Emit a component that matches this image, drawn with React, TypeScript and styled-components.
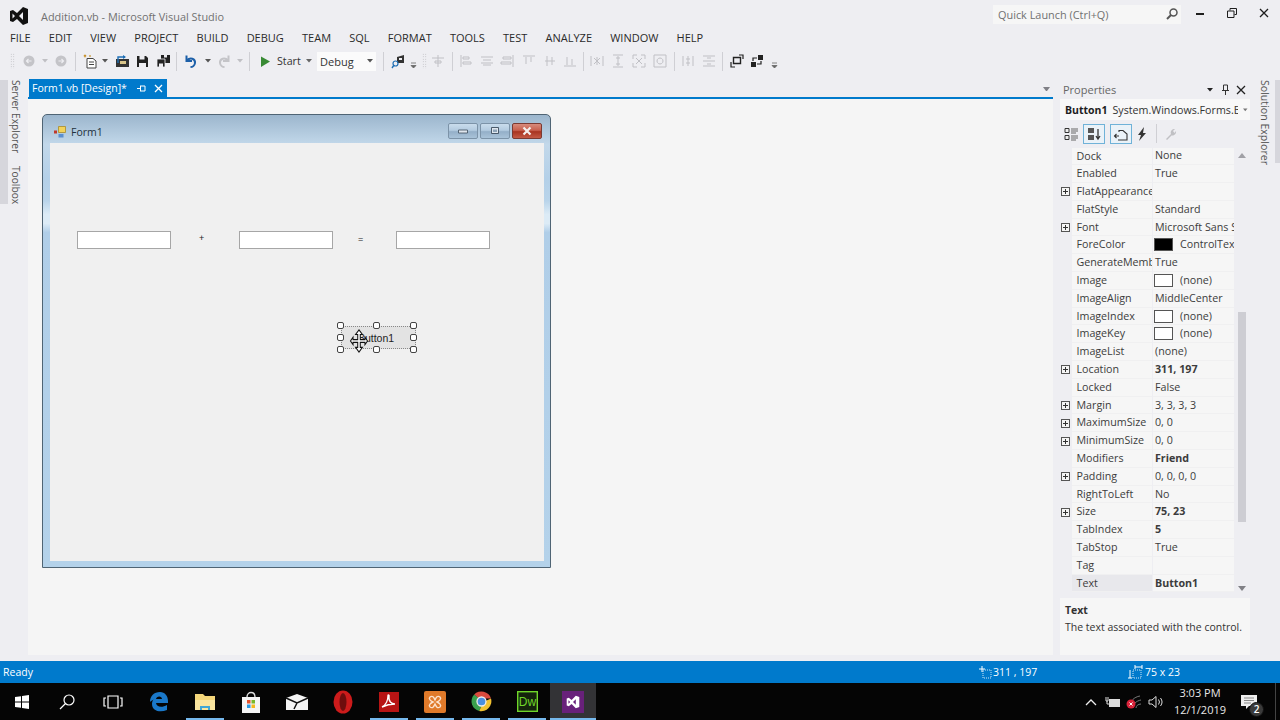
import { ReactNode } from "react";
import styled, { createGlobalStyle } from "styled-components";

const UI_FONT = `"Open Sans", "Noto Sans", "Liberation Sans", sans-serif`;

const GlobalStyle = createGlobalStyle`
  html, body {
    margin: 0;
    padding: 0;
    background: #eeeef2;
  }
  * {
    box-sizing: border-box;
  }
`;

const menus = ["FILE", "EDIT", "VIEW", "PROJECT", "BUILD", "DEBUG", "TEAM", "SQL", "FORMAT", "TOOLS", "TEST", "ANALYZE", "WINDOW", "HELP"];

type Prop = { name: string; value?: string; plus?: boolean; bold?: boolean; swatch?: string; selected?: boolean };

const props: Prop[] = [
  { name: "Dock", value: "None" },
  { name: "Enabled", value: "True" },
  { name: "FlatAppearance", plus: true },
  { name: "FlatStyle", value: "Standard" },
  { name: "Font", value: "Microsoft Sans Serif, 8.25pt", plus: true },
  { name: "ForeColor", value: "ControlText", swatch: "#000" },
  { name: "GenerateMember", value: "True" },
  { name: "Image", value: "(none)", swatch: "#fff" },
  { name: "ImageAlign", value: "MiddleCenter" },
  { name: "ImageIndex", value: "(none)", swatch: "#fff" },
  { name: "ImageKey", value: "(none)", swatch: "#fff" },
  { name: "ImageList", value: "(none)" },
  { name: "Location", value: "311, 197", plus: true, bold: true },
  { name: "Locked", value: "False" },
  { name: "Margin", value: "3, 3, 3, 3", plus: true },
  { name: "MaximumSize", value: "0, 0", plus: true },
  { name: "MinimumSize", value: "0, 0", plus: true },
  { name: "Modifiers", value: "Friend", bold: true },
  { name: "Padding", value: "0, 0, 0, 0", plus: true },
  { name: "RightToLeft", value: "No" },
  { name: "Size", value: "75, 23", plus: true, bold: true },
  { name: "TabIndex", value: "5", bold: true },
  { name: "TabStop", value: "True" },
  { name: "Tag" },
  { name: "Text", value: "Button1", bold: true, selected: true },
];

const Screen = styled.div`
  width: 1280px;
  height: 720px;
  overflow: hidden;
  display: flex;
  flex-direction: column;
  background: #eeeef2;
  font-family: ${UI_FONT};
  color: #1e1e1e;
`;

const TitleBar = styled.div`
  height: 28px;
  display: flex;
  align-items: center;
  padding: 1px 0 0 9px;
`;

const LogoSlot = styled.div`
  display: flex;
  margin-top: 3px;
`;

const AppTitle = styled.div`
  margin-left: 12px;
  font-size: 10.9px;
  color: #717171;
  flex: 1;
  padding-top: 3px;
`;

const QuickLaunch = styled.div`
  width: 188px;
  height: 19px;
  margin-top: -1px;
  background: #f6f6f6;
  display: flex;
  align-items: center;
  justify-content: space-between;
  padding: 0 2px 0 5px;
  font-size: 10.9px;
  color: #717171;
`;

const WindowButtons = styled.div`
  display: flex;
  width: 99px;
  padding-left: 3px;
  margin-top: -3px;
`;

const WindowButton = styled.div`
  width: 32px;
  height: 20px;
  display: flex;
  align-items: center;
  justify-content: center;
`;

const MenuBar = styled.div`
  height: 18px;
  display: flex;
  align-items: center;
  padding-left: 10px;
  gap: 18.2px;
  font-size: 11px;
  color: #2a2a2a;
`;

const ToolBar = styled.div`
  height: 34px;
  display: flex;
  align-items: flex-start;
  padding: 4px 0 0 10px;
`;

const ToolGroup = styled.div`
  display: flex;
  align-items: center;
  height: 22px;
`;

const Gripper = styled.div<{ $l?: number; $r?: number }>`
  width: 5px;
  height: 16px;
  margin-left: ${(p) => p.$l ?? 0}px;
  margin-right: ${(p) => p.$r ?? 0}px;
  background-image: radial-gradient(#b6b6bb 0.7px, transparent 0.8px);
  background-size: 2.5px 2.5px;
`;

const Divider = styled.div<{ $l: number; $r: number }>`
  width: 1px;
  height: 19px;
  flex: none;
  background: #cfcfd4;
  margin-left: ${(p) => p.$l}px;
  margin-right: ${(p) => p.$r}px;
`;

const ToolSlot = styled.div<{ $w: number }>`
  width: ${(p) => p.$w}px;
  height: 18px;
  flex: none;
  display: flex;
  align-items: center;
  justify-content: center;
`;

const StartLabel = styled.span`
  width: 25px;
  font-size: 10.7px;
  margin-left: 2px;
  color: #333;
`;

const ConfigBox = styled.div`
  width: 59px;
  height: 19px;
  margin-left: 1px;
  background: #fbfbfb;
  display: flex;
  align-items: center;
  justify-content: space-between;
  padding: 0 3px 0 3px;
  font-size: 11px;
  color: #333;
`;

const OverflowSlot = styled.div<{ $l: number }>`
  display: flex;
  margin-left: ${(p) => p.$l}px;
`;

const Workspace = styled.div`
  flex: 1;
  display: flex;
  min-height: 0;
`;

const SideRail = styled.div<{ $w: number; $end?: boolean }>`
  width: ${(p) => p.$w}px;
  flex: none;
  display: flex;
  align-items: flex-start;
  justify-content: ${(p) => (p.$end ? "flex-end" : "flex-start")};
  background: #eeeef2;
`;

const LeftStrip = styled.div`
  width: 8px;
  height: 124px;
  background: #d6d6dc;
`;

const RailTabs = styled.div`
  display: flex;
  flex-direction: column;
  gap: 13px;
  margin-left: 1px;
`;

const RailLabel = styled.div<{ $size: number }>`
  writing-mode: vertical-rl;
  font-size: ${(p) => p.$size}px;
  line-height: 13px;
  color: #555;
`;

const RightStrip = styled.div`
  width: 5px;
  height: 83px;
  background: #d6d6dc;
  margin-left: 4px;
`;

const DocArea = styled.div`
  width: 1025px;
  display: flex;
  flex-direction: column;
`;

const TabRow = styled.div`
  height: 19px;
  border-bottom: 2px solid #007acc;
  display: flex;
  align-items: flex-end;
  justify-content: space-between;
  padding-left: 1px;
`;

const DocTab = styled.div`
  width: 138px;
  height: 18px;
  background: #007acc;
  color: #fff;
  font-size: 10.5px;
  display: flex;
  align-items: center;
  padding-left: 3px;
  white-space: nowrap;
`;

const TabName = styled.span`
  flex: 1;
`;

const TabIcon = styled.span`
  width: 16px;
  height: 16px;
  margin-right: 1px;
  display: flex;
  align-items: center;
  justify-content: center;
`;

const TabMenu = styled.div`
  width: 7px;
  height: 4px;
  margin: 0 3px 6px 0;
  border-left: 3.5px solid transparent;
  border-right: 3.5px solid transparent;
  border-top: 4px solid #7f7f86;
`;

const DesignSurface = styled.div`
  height: 556px;
  background: #f5f5f5;
  padding: 15px 0 0 14px;
`;

const FormWindow = styled.div`
  width: 509px;
  height: 454px;
  border: 1px solid #4f6474;
  border-radius: 5px 5px 0 0;
  background: linear-gradient(180deg, #9cb6cd 0%, #c2d8ea 6.5%, #b4d0e8 14%, #b9d4ea 19%, #dcebf6 22%, #dcebf6 24%, #b0cee8 26%, #b4d2ea 100%);
  display: flex;
  flex-direction: column;
  padding: 0 6px 6px 7px;
`;

const FormTitle = styled.div`
  height: 28px;
  display: flex;
  align-items: center;
  gap: 4px;
  font-size: 10.5px;
  color: #22313d;
  padding: 6px 2px 0 3px;
`;

const FormTitleText = styled.span`
  flex: 1;
`;

const CaptionButtons = styled.div`
  display: flex;
  gap: 2px;
  margin-top: -3px;
`;

const CaptionButton = styled.div<{ $close?: boolean }>`
  width: 30px;
  height: 16px;
  border: 1px solid ${(p) => (p.$close ? "#7b3a32" : "#7c93a8")};
  border-radius: 2px;
  background: ${(p) =>
    p.$close
      ? "linear-gradient(180deg, #d88b7c 0%, #c8604e 45%, #a83420 55%, #c45a45 100%)"
      : "linear-gradient(180deg, #c9dcec 0%, #b3cbe0 45%, #94afc8 55%, #a9c3d9 100%)"};
  display: flex;
  align-items: center;
  justify-content: center;
`;

const FormCanvas = styled.div`
  flex: 1;
  position: relative;
  background: #f0f0f0;
`;

const TextField = styled.div<{ $x: number }>`
  position: absolute;
  left: ${(p) => p.$x}px;
  top: 88px;
  width: 94px;
  height: 18px;
  background: #fff;
  border: 1px solid #a6a6a6;
`;

const OperatorLabel = styled.div<{ $x: number; $y: number }>`
  position: absolute;
  left: ${(p) => p.$x}px;
  top: ${(p) => p.$y}px;
  font-family: "Liberation Sans", sans-serif;
  font-size: 9px;
  color: #222;
`;

const SelectedButton = styled.div`
  position: absolute;
  left: 291px;
  top: 183px;
  width: 75px;
  height: 23px;
  padding-right: 5px;
  border: 1px dotted #888;
  background: #e3e3e3;
  display: flex;
  align-items: center;
  justify-content: center;
  font-family: "Liberation Sans", sans-serif;
  font-size: 10.5px;
  color: #222;
`;

const Handle = styled.div<{ $x: number; $y: number }>`
  position: absolute;
  left: ${(p) => p.$x}px;
  top: ${(p) => p.$y}px;
  width: 7px;
  height: 7px;
  background: #fff;
  border: 1px solid #444;
  border-radius: 2px;
`;

const MoveCursor = styled.svg`
  position: absolute;
  left: 299px;
  top: 185px;
`;

const PropertiesPanel = styled.div`
  width: 190px;
  margin-left: 7px;
  flex: none;
  display: flex;
  flex-direction: column;
`;

const PanelHeader = styled.div`
  height: 19px;
  display: flex;
  align-items: center;
  font-size: 11px;
  color: #666;
  padding: 0 1px 0 3px;
`;

const HeaderDots = styled.div`
  flex: 1;
  height: 6px;
  margin: 0 10px 0 6px;
  background-image: radial-gradient(#c4c4c9 0.6px, transparent 0.7px);
  background-size: 2px 2px;
`;

const HeaderIcon = styled.span`
  width: 16px;
  height: 16px;
  display: flex;
  align-items: center;
  justify-content: center;
  &:first-of-type {
    margin-left: 4px;
  }
`;

const ObjectSelect = styled.div`
  height: 21px;
  background: #f8f8f8;
  display: flex;
  align-items: center;
  padding: 0 2px 0 5px;
  font-size: 10.7px;
  white-space: nowrap;
  overflow: hidden;
  gap: 5px;
`;

const ObjectName = styled.b`
  font-weight: 700;
  font-size: 10.5px;
`;

const ObjectType = styled.span`
  width: 126px;
  overflow: hidden;
  color: #333;
  flex: none;
`;

const PropToolbar = styled.div`
  height: 27px;
  display: flex;
  align-items: center;
  gap: 1px;
`;

const PropToolButton = styled.div<{ $on?: boolean; $w?: number }>`
  width: ${(p) => p.$w ?? 22}px;
  height: 20px;
  display: flex;
  align-items: center;
  justify-content: center;
  border: 1px solid ${(p) => (p.$on ? "#6fb2d8" : "transparent")};
  background: ${(p) => (p.$on ? "#eaf2f8" : "transparent")};
`;

const ToolSpacer = styled.div`
  width: 3px;
`;

const GridWrap = styled.div`
  height: 447px;
  display: flex;
  background: #eeeef2;
`;

const Grid = styled.div`
  width: 174px;
  padding-top: 0.5px;
`;

const Row = styled.div`
  height: 17.8px;
  display: grid;
  grid-template-columns: 12px 80px 82px;
  align-items: center;
  font-size: 10.7px;
  color: #3c3c3c;
`;

const Expander = styled.div`
  display: flex;
  align-items: center;
  justify-content: center;
  height: 100%;
  padding-right: 1px;
`;

const PlusBox = styled.div`
  width: 9px;
  height: 9px;
  border: 1px solid #555;
  position: relative;
  background: #f5f5f5;
  &::before {
    content: "";
    position: absolute;
    left: 1px;
    right: 1px;
    top: 3px;
    height: 1px;
    background: #333;
  }
  &::after {
    content: "";
    position: absolute;
    top: 1px;
    bottom: 1px;
    left: 3px;
    width: 1px;
    background: #333;
  }
`;

const NameCell = styled.div<{ $selected?: boolean }>`
  height: 100%;
  padding-left: 4.5px;
  background: ${(p) => (p.$selected ? "#e8e8ec" : "#f6f6f6")};
  border-bottom: 1px solid #f0f0f1;
  white-space: nowrap;
  overflow: hidden;
  line-height: 17px;
`;

const ValueCell = styled.div<{ $bold?: boolean }>`
  height: 100%;
  margin-left: 1px;
  padding-left: 2px;
  background: #f6f6f6;
  border-bottom: 1px solid #f0f0f1;
  font-weight: ${(p) => (p.$bold ? 700 : 400)};
  white-space: nowrap;
  overflow: hidden;
  display: flex;
  align-items: center;
  line-height: 17px;
`;

const Swatch = styled.span<{ $color: string }>`
  width: 19px;
  height: 13px;
  flex: none;
  margin: 0 7px 0 -1px;
  background: ${(p) => p.$color};
  border: 1px solid #555;
`;

const ScrollTrack = styled.div`
  width: 16px;
  display: flex;
  flex-direction: column;
  align-items: center;
  padding: 6px 0 3px;
`;

const ScrollThumb = styled.div`
  width: 8px;
  height: 210px;
  background: #cdcdd3;
  margin-top: 154px;
  margin-bottom: auto;
`;

const ArrowUp = styled.div`
  border-left: 4px solid transparent;
  border-right: 4px solid transparent;
  border-bottom: 5px solid #a0a0a6;
`;

const ArrowDown = styled.div`
  border-left: 4px solid transparent;
  border-right: 4px solid transparent;
  border-top: 5px solid #808086;
`;

const Description = styled.div`
  margin-top: 4px;
  height: 57px;
  background: #f6f6f6;
  padding: 4px 5px;
  font-size: 10.5px;
  line-height: 17px;
  color: #333;
`;

const DescTitle = styled.div`
  font-weight: 700;
`;

const StatusBar = styled.div`
  height: 22px;
  background: #007acc;
  color: #fff;
  font-size: 10.5px;
  display: flex;
  align-items: center;
  padding-left: 3px;
`;

const StatusReady = styled.span`
  width: 975px;
`;

const StatusItem = styled.span<{ $w: number }>`
  width: ${(p) => p.$w}px;
  display: flex;
  align-items: center;
  gap: 1px;
`;

const Taskbar = styled.div`
  height: 37px;
  background: #050505;
  display: flex;
  align-items: stretch;
  color: #fff;
`;

const TaskCell = styled.div<{ $on?: boolean; $active?: boolean; $w?: number }>`
  width: ${(p) => p.$w ?? 46}px;
  flex: none;
  display: flex;
  align-items: center;
  justify-content: center;
  background: ${(p) => (p.$active ? "#333336" : "transparent")};
  position: relative;
  &::after {
    content: "";
    display: ${(p) => (p.$on ? "block" : "none")};
    position: absolute;
    left: ${(p) => (p.$active ? 0 : 4)}px;
    right: ${(p) => (p.$active ? 0 : 4)}px;
    bottom: 0;
    height: 2px;
    background: #76b9ed;
  }
`;

const Tray = styled.div`
  margin-left: auto;
  display: flex;
  align-items: center;
`;

const TrayIcon = styled.div<{ $w: number }>`
  width: ${(p) => p.$w}px;
  display: flex;
  justify-content: center;
`;

const Clock = styled.div`
  width: 62px;
  padding-bottom: 2px;
  font-size: 11px;
  line-height: 17px;
  text-align: center;
  color: #e8e8e8;
`;

const Notify = styled.div`
  width: 45px;
  height: 100%;
  display: flex;
  align-items: center;
  justify-content: center;
  padding-right: 9px;
  border-right: 1px solid #444;
  margin-right: 4px;
  position: relative;
`;

const NotifyBadge = styled.span`
  position: absolute;
  right: 11px;
  bottom: 3px;
  width: 15px;
  height: 15px;
  border-radius: 50%;
  background: #3a3a3a;
  border: 1px solid #111;
  font-size: 10px;
  line-height: 13px;
  text-align: center;
  color: #fff;
  font-weight: 600;
`;

const Icon = ({ w = 16, h = 16, children }: { w?: number; h?: number; children: ReactNode }) => (
  <svg width={w} height={h} viewBox={`0 0 ${w} ${h}`} fill="none">
    {children}
  </svg>
);

const VsLogo = ({ size, color }: { size: number; color: string }) => (
  <svg width={size} height={size} viewBox="0 0 20 20">
    <path fill={color} d="M14 1l5 2v14l-5 2-6-6-4 3-3-1V5l3-1 4 3zM3.5 7.5v5L6 10zM14 6l-4 4 4 4z" />
  </svg>
);

const Caret = ({ color = "#8a8a8f" }: { color?: string }) => (
  <svg width="6" height="4" viewBox="0 0 6 4">
    <path d="M0 0h6L3 3.5z" fill={color} />
  </svg>
);

const OverflowCaret = () => (
  <svg width="7" height="18" viewBox="0 0 7 18">
    <path d="M1 11h5M1 13.500h5l-2.500 2.500z" stroke="#666" strokeWidth="0.8" fill="#666" />
  </svg>
);

const Grey = ({ d }: { d: string }) => (
  <Icon>
    <path d={d} stroke="#c0c0c5" strokeWidth="1" />
  </Icon>
);

const layoutIcons = [
  "M3 2v12M5 4h6v2H5zM5 9h8v2H5z",
  "M2 4h12M4 7h8M2 10h12M4 12h8",
  "M13 2v12M3 4h8v2H3zM1 9h10v2H1z",
  "M2 3h12M5 4v7M10 4v5",
  "M3 8h10M5 3v10M10 4v8",
  "M2 13h12M5 4v8M10 6v6",
];

const spacingIcons = [
  "M2 3v10M14 3v10M5 5l6 6M11 5l-6 6M8 4v8",
  "M3 2h10M3 14h10M8 3v10M6 5h4M6 11h4",
  "M2 2h4M2 2v4M14 2h-4M14 2v4M2 14h4M2 14v-4M14 14h-4M14 14v-4M5 5l6 6M11 5l-6 6",
  "M2 2h12v12H2zM8 5a3 3 0 1 0 .01 0",
];

const App = () => {
  return (
    <Screen>
      <GlobalStyle />
      <TitleBar>
        <LogoSlot>
          <VsLogo size={20} color="#111" />
        </LogoSlot>
        <AppTitle>Addition.vb - Microsoft Visual Studio</AppTitle>
        <QuickLaunch>
          Quick Launch (Ctrl+Q)
          <Icon w={14} h={14}>
            <circle cx="8.500" cy="5.500" r="3.500" stroke="#555" strokeWidth="1.500" />
            <path d="M6 8l-4 4" stroke="#555" strokeWidth="2" />
          </Icon>
        </QuickLaunch>
        <WindowButtons>
          <WindowButton>
            <Icon w={10} h={10}>
              <path d="M1 6h8" stroke="#1e1e1e" strokeWidth="2" />
            </Icon>
          </WindowButton>
          <WindowButton>
            <Icon w={10} h={10}>
              <path d="M3 2.500V.5h6.500v6H7.500M.5 3h6.500v6.500H.5z" stroke="#1e1e1e" strokeWidth="1" />
            </Icon>
          </WindowButton>
          <WindowButton>
            <Icon w={10} h={10}>
              <path d="M1 1l8 8M9 1l-8 8" stroke="#1e1e1e" strokeWidth="1.300" />
            </Icon>
          </WindowButton>
        </WindowButtons>
      </TitleBar>

      <MenuBar>
        {menus.map((m) => (
          <span key={m}>{m}</span>
        ))}
      </MenuBar>

      <ToolBar>
        <ToolGroup>
          <Gripper $r={7} />
          <ToolSlot $w={14}>
            <Icon w={14} h={14}>
              <circle cx="7" cy="7" r="5.500" fill="#c4c4c8" />
              <path d="M9.500 7h-5M6.500 5l-2 2 2 2" stroke="#eeeef2" strokeWidth="1.200" />
            </Icon>
          </ToolSlot>
          <ToolSlot $w={18}>
            <Caret color="#c0c0c4" />
          </ToolSlot>
          <ToolSlot $w={14}>
            <Icon w={14} h={14}>
              <circle cx="7" cy="7" r="5.500" fill="#c4c4c8" />
              <path d="M4.500 7h5M7.500 5l2 2-2 2" stroke="#eeeef2" strokeWidth="1.200" />
            </Icon>
          </ToolSlot>
          <Divider $l={7} $r={6} />
          <ToolSlot $w={16}>
            <Icon w={14} h={15}>
              <path d="M4 4.500h6l3 2.500v7H4z" stroke="#444" fill="#fff" />
              <path d="M1 1l2 2M3 1L1 3M7 1v2" stroke="#c8922e" strokeWidth="1.200" />
              <path d="M6 8h5M6 10.500h5" stroke="#444" />
            </Icon>
          </ToolSlot>
          <ToolSlot $w={14}>
            <Caret color="#555" />
          </ToolSlot>
          <ToolSlot $w={20}>
            <Icon w={15} h={14}>
              <path d="M1 5h13v8H1z" fill="#333" />
              <path d="M3 9V3h7" stroke="#1f6fb5" strokeWidth="1.400" />
              <path d="M8 1l3 2-3 2z" fill="#1f6fb5" />
              <path d="M5 7h6v3H5z" fill="#d9c58a" />
            </Icon>
          </ToolSlot>
          <ToolSlot $w={20}>
            <Icon w={13} h={13}>
              <path d="M1 1h9l2 2v9H1z" fill="#222" />
              <path d="M3.500 1h5v3.500h-5z" fill="#eeeef2" />
              <path d="M3 8h7v4H3z" fill="#eeeef2" />
            </Icon>
          </ToolSlot>
          <ToolSlot $w={22}>
            <Icon w={15} h={14}>
              <path d="M5 1h9v8H5z" fill="#222" />
              <path d="M8 1h3v2.500H8z" fill="#eeeef2" />
              <path d="M1 5h8v8H1z" fill="#222" stroke="#eeeef2" strokeWidth="0.800" />
              <path d="M3 9.500h4V13H3z" fill="#eeeef2" />
            </Icon>
          </ToolSlot>
          <Divider $l={2} $r={5} />
          <ToolSlot $w={18}>
            <Icon w={14} h={14}>
              <path d="M2.500 1.500v5.500h5.500M3 6.500c3-3.500 8.500-2 8 2.500-.3 2.500-2.500 4-4.500 4" stroke="#1c5fa8" strokeWidth="2" />
            </Icon>
          </ToolSlot>
          <ToolSlot $w={16}>
            <Caret color="#555" />
          </ToolSlot>
          <ToolSlot $w={16}>
            <Icon w={14} h={14}>
              <path d="M11.500 1.500v5.500H6M11 6.500C8 3 2.500 4.500 3 9c.3 2.500 2.500 4 4.500 4" stroke="#c4c4c8" strokeWidth="2" />
            </Icon>
          </ToolSlot>
          <ToolSlot $w={16}>
            <Caret color="#c0c0c4" />
          </ToolSlot>
          <Divider $l={1} $r={5} />
          <ToolSlot $w={20}>
            <Icon w={12} h={13}>
              <path d="M2 1.500l9 5-9 5.500z" fill="#388a34" />
            </Icon>
          </ToolSlot>
          <StartLabel>Start</StartLabel>
          <ToolSlot $w={14}>
            <Caret color="#666" />
          </ToolSlot>
          <ConfigBox>
            Debug
            <Caret color="#555" />
          </ConfigBox>
          <Divider $l={7} $r={6} />
          <ToolSlot $w={16}>
            <Icon w={15} h={15}>
              <path d="M6 3l7-2v8H6z" fill="#333" />
              <path d="M8 4h3v2H8z" fill="#eeeef2" />
              <circle cx="4.500" cy="9.500" r="2.500" stroke="#1f6fb5" strokeWidth="1.200" />
              <path d="M3 11l-2 3" stroke="#1f6fb5" strokeWidth="1.400" />
            </Icon>
          </ToolSlot>
          <OverflowSlot $l={4}>
            <OverflowCaret />
          </OverflowSlot>
          <Gripper $l={5} $r={3} />
          <ToolSlot $w={16}>
            <Grey d="M8 2v12M2 5h12M5 8h6v2H5z" />
          </ToolSlot>
          <Divider $l={6} $r={3} />
          {layoutIcons.map((d) => (
            <ToolSlot key={d} $w={20.8}>
              <Grey d={d} />
            </ToolSlot>
          ))}
          <Divider $l={2} $r={3} />
          {spacingIcons.map((d) => (
            <ToolSlot key={d} $w={21}>
              <Grey d={d} />
            </ToolSlot>
          ))}
          <Divider $l={3} $r={3} />
          <ToolSlot $w={21}>
            <Grey d="M3 3v10M13 3v10M8 3v10M6 6h4M6 10h4" />
          </ToolSlot>
          <ToolSlot $w={21}>
            <Grey d="M2 3h12M2 13h12M2 8h12M6 5h4M6 11h4" />
          </ToolSlot>
          <Divider $l={2} $r={4} />
          <ToolSlot $w={20}>
            <Icon w={14} h={14}>
              <path d="M3.500 3.500h7v6h-7z" stroke="#222" strokeWidth="1.400" />
              <path d="M1 8v5h4M9 1h4v4" stroke="#222" strokeWidth="1.200" />
            </Icon>
          </ToolSlot>
          <ToolSlot $w={20}>
            <Icon w={14} h={14}>
              <path d="M1 8h5v5H1zM8 1h5v5H8z" fill="#222" />
              <path d="M3 7V4h4M11 7v3H7" stroke="#222" strokeWidth="1.200" />
            </Icon>
          </ToolSlot>
          <OverflowSlot $l={4}>
            <OverflowCaret />
          </OverflowSlot>
        </ToolGroup>
      </ToolBar>

      <Workspace>
        <SideRail $w={28}>
          <LeftStrip />
          <RailTabs>
            <RailLabel $size={10.2}>Server Explorer</RailLabel>
            <RailLabel $size={10.2}>Toolbox</RailLabel>
          </RailTabs>
        </SideRail>

        <DocArea>
          <TabRow>
            <DocTab>
              <TabName>Form1.vb [Design]*</TabName>
              <TabIcon>
                <Icon w={9} h={9}>
                  <path d="M0 4.500h3M3 2h5M3 7h5M3.500 2v5M8 2v5" stroke="#fff" strokeWidth="1" />
                </Icon>
              </TabIcon>
              <TabIcon>
                <Icon w={9} h={9}>
                  <path d="M1 1l7 7M8 1l-7 7" stroke="#fff" strokeWidth="1.300" />
                </Icon>
              </TabIcon>
            </DocTab>
            <TabMenu />
          </TabRow>
          <DesignSurface>
            <FormWindow>
              <FormTitle>
                <Icon w={14} h={14}>
                  <path d="M5.500 1.500h7v6h-7z" fill="#f2d25a" stroke="#a88a2a" strokeWidth="0.800" />
                  <path d="M1 5.500h3v3H1z" fill="#c0392b" />
                  <path d="M5.500 9h5v3.500h-5z" fill="#5b8fd0" />
                </Icon>
                <FormTitleText>Form1</FormTitleText>
                <CaptionButtons>
                  <CaptionButton>
                    <Icon w={12} h={6}>
                      <path d="M1.500 2h9v3h-9z" fill="#dfe6ee" stroke="#3c4c5c" strokeWidth="0.800" />
                    </Icon>
                  </CaptionButton>
                  <CaptionButton>
                    <Icon w={10} h={9}>
                      <path d="M1.500 1.500h7v6h-7z" fill="#dfe6ee" stroke="#3c4c5c" strokeWidth="0.900" />
                      <path d="M3 3.500h4v2.500H3z" fill="#8ea4b8" />
                    </Icon>
                  </CaptionButton>
                  <CaptionButton $close>
                    <Icon w={12} h={10}>
                      <path d="M2.500 1.500l7 7M9.500 1.500l-7 7" stroke="#f4f0ee" strokeWidth="2.200" />
                    </Icon>
                  </CaptionButton>
                </CaptionButtons>
              </FormTitle>
              <FormCanvas>
                <TextField $x={27} />
                <OperatorLabel $x={149} $y={90}>+</OperatorLabel>
                <TextField $x={189} />
                <OperatorLabel $x={308} $y={91}>=</OperatorLabel>
                <TextField $x={346} />
                <SelectedButton>Button1</SelectedButton>
                <Handle $x={287} $y={179} />
                <Handle $x={323} $y={179} />
                <Handle $x={360} $y={179} />
                <Handle $x={287} $y={191} />
                <Handle $x={360} $y={191} />
                <Handle $x={287} $y={203} />
                <Handle $x={323} $y={203} />
                <Handle $x={360} $y={203} />
                <MoveCursor width="20" height="26" viewBox="0 0 20 26">
                  <path
                    d="M10 1l4 5h-2.500v5.500H17V9l3 4-3 4v-2.500h-5.500V20H14l-4 5-4-5h2.500v-5.500H3V17l-3-4 3-4v2.500h5.500V6H6z"
                    fill="#fff"
                    stroke="#111"
                    strokeWidth="1.200"
                    transform="translate(1.500 1) scale(0.85 0.92)"
                  />
                </MoveCursor>
              </FormCanvas>
            </FormWindow>
          </DesignSurface>
        </DocArea>

        <PropertiesPanel>
          <PanelHeader>
            Properties
            <HeaderDots />
            <Caret color="#222" />
            <HeaderIcon>
              <Icon w={9} h={11}>
                <path d="M2.500 1h4v5.500h-4zM1 6.500h7M4.500 6.500V11" stroke="#333" strokeWidth="1" />
              </Icon>
            </HeaderIcon>
            <HeaderIcon>
              <Icon w={10} h={10}>
                <path d="M1 1l8 8M9 1l-8 8" stroke="#222" strokeWidth="1.300" />
              </Icon>
            </HeaderIcon>
          </PanelHeader>
          <ObjectSelect>
            <ObjectName>Button1</ObjectName>
            <ObjectType>System.Windows.Forms.Button</ObjectType>
            <Caret color="#777" />
          </ObjectSelect>
          <PropToolbar>
            <PropToolButton>
              <Icon w={15} h={14}>
                <path d="M1 1.500h4v4H1zM1 8.500h4v4H1z" fill="#eee" stroke="#333" />
                <path d="M7 2h7M7 4h7M7 6h5M7 9h7M7 11h7M7 13h5" stroke="#666" />
              </Icon>
            </PropToolButton>
            <PropToolButton $on>
              <Icon w={15} h={14}>
                <path d="M1 1h6v5H1zM1 8h6v5H1z" fill="#555" />
                <path d="M11 2v9M9 9l2 3 2-3" stroke="#333" strokeWidth="1.300" />
              </Icon>
            </PropToolButton>
            <ToolSpacer />
            <PropToolButton $on>
              <Icon w={16} h={14}>
                <path d="M6 5V3.500h4L14 7v6H5" stroke="#333" strokeWidth="1.100" />
                <path d="M1 9h5M3.500 7L1.500 9l2 2" stroke="#333" strokeWidth="1.100" />
              </Icon>
            </PropToolButton>
            <PropToolButton $w={18}>
              <Icon w={12} h={14}>
                <path d="M8 0L2 8h3l-2 6 7-8H7z" fill="#333" />
              </Icon>
            </PropToolButton>
            <Divider $l={4} $r={1} />
            <PropToolButton>
              <Icon w={14} h={14}>
                <path d="M3 12l5-5c-1-3 1-5 4-5l-2 2 1.500 2L13 4c.5 3-2 5-4.500 4.500L4 13z" fill="#c0c0c4" />
              </Icon>
            </PropToolButton>
          </PropToolbar>
          <GridWrap>
            <Grid>
              {props.map((p) => (
                <Row key={p.name}>
                  <Expander>{p.plus && <PlusBox />}</Expander>
                  <NameCell $selected={p.selected}>{p.name}</NameCell>
                  <ValueCell $bold={p.bold}>
                    {p.swatch && <Swatch $color={p.swatch} />}
                    {p.value}
                  </ValueCell>
                </Row>
              ))}
            </Grid>
            <ScrollTrack>
              <ArrowUp />
              <ScrollThumb />
              <ArrowDown />
            </ScrollTrack>
          </GridWrap>
          <Description>
            <DescTitle>Text</DescTitle>
            The text associated with the control.
          </Description>
        </PropertiesPanel>

        <SideRail $w={30} $end>
          <RailLabel $size={10.6}>Solution Explorer</RailLabel>
          <RightStrip />
        </SideRail>
      </Workspace>

      <StatusBar>
        <StatusReady>Ready</StatusReady>
        <StatusItem $w={150}>
          <Icon w={14} h={14}>
            <path d="M4 1v6M1 4h6" stroke="#fff" />
            <path d="M5 5h8v8H5z" stroke="#cfe6f6" strokeDasharray="1 1" />
          </Icon>
          311 , 197
        </StatusItem>
        <StatusItem $w={80}>
          <Icon w={16} h={14}>
            <path d="M5 5h8v8H5z" stroke="#cfe6f6" strokeDasharray="1 1" />
            <path d="M2 5v8M0 13h4M7 2h7M7 0v4M14 0v4" stroke="#fff" />
          </Icon>
          75 x 23
        </StatusItem>
      </StatusBar>

      <Taskbar>
        <TaskCell $w={44}>
          <Icon w={16} h={16}>
            <path d="M1 3l6-.8V7.500H1zM8 2l7-1v6.500H8zM1 8.500h6v5.300l-6-.8zM8 8.500h7V15l-7-1z" fill="#fff" />
          </Icon>
        </TaskCell>
        <TaskCell>
          <Icon w={18} h={18}>
            <circle cx="11" cy="7" r="5" stroke="#fff" strokeWidth="1.200" />
            <path d="M7.500 10.500L2 16" stroke="#fff" strokeWidth="1.300" />
          </Icon>
        </TaskCell>
        <TaskCell>
          <Icon w={20} h={16}>
            <path d="M5 2h10v12H5zM3 4H1v8h2M17 4h2v8h-2" stroke="#fff" strokeWidth="1.200" />
          </Icon>
        </TaskCell>
        <TaskCell>
          <Icon w={20} h={22}>
            <path
              d="M1 11C1 5 5 1 11 1c5 0 8 4 8 9v2H7c.3 4 6 5 11 2v5c-7 3-15 1-15-6 0-2 .5-3 1.500-4.500C3 9.500 2 10 1 11zm6-3h6c0-3.500-5.500-3.500-6 0z"
              fill="#1a78c9"
            />
          </Icon>
        </TaskCell>
        <TaskCell $on>
          <Icon w={22} h={20}>
            <path d="M1 2h8l2 2h10v14H1z" fill="#f4d67a" />
            <path d="M1 8h20v10H1z" fill="#f9e59f" />
            <path d="M6 14h10v4h-2v-2H8v2H6z" fill="#3fa6d6" />
          </Icon>
        </TaskCell>
        <TaskCell>
          <Icon w={22} h={24}>
            <path d="M2 7h18v16H2z" fill="#f4f4f4" />
            <path d="M7 7c0-6 8-6 8 0" stroke="#ddd" strokeWidth="1.400" />
            <path d="M7 10h3.500v3.500H7z" fill="#e4502a" />
            <path d="M11.500 10H15v3.500h-3.500z" fill="#77b82a" />
            <path d="M7 14.500h3.500V18H7z" fill="#2a9ae4" />
            <path d="M11.500 14.500H15V18h-3.500z" fill="#f4b920" />
          </Icon>
        </TaskCell>
        <TaskCell>
          <Icon w={24} h={18}>
            <path d="M1 5l11-4 11 4v12H1z" fill="#f4f4f4" />
            <path d="M1 5l11 5 11-5M12 10l-3 6" stroke="#111" strokeWidth="1.500" />
          </Icon>
        </TaskCell>
        <TaskCell>
          <Icon w={20} h={24}>
            <ellipse cx="10" cy="12" rx="9.500" ry="11.500" fill="#cc1b1b" />
            <ellipse cx="10" cy="12" rx="3.500" ry="9" fill="#6e0d0d" />
          </Icon>
        </TaskCell>
        <TaskCell $on>
          <Icon w={20} h={20}>
            <path d="M0 0h20v20H0z" fill="#b71414" />
            <path d="M3 15c4-2 6-7 6-11 0-2 1.500-1 1 1-.5 4 2 7 6 7-5 0-9 1-13 3z" stroke="#fff" strokeWidth="1.400" />
          </Icon>
        </TaskCell>
        <TaskCell $on>
          <Icon w={22} h={22}>
            <rect width="22" height="22" rx="2" fill="#e07a2a" />
            <path d="M6 6c3-2 4 1 5 3 1-2 2-5 5-3 2 2-1 4-3 5 2 1 5 3 3 5-3 2-4-1-5-3-1 2-2 5-5 3-2-2 1-4 3-5-2-1-5-3-3-5z" stroke="#fbe3cf" strokeWidth="1.400" />
          </Icon>
        </TaskCell>
        <TaskCell $on>
          <Icon w={21} h={21}>
            <path d="M10.500 10.500L3.200 3.500A10 10 0 0 1 20 7.500H10.500z" fill="#d94a3d" />
            <path d="M3.200 3.500a10 10 0 0 0 5 16.500l4-9z" fill="#3aa04d" />
            <path d="M20 7.500a10 10 0 0 1-11.800 12.500l4-9z" fill="#f2c230" />
            <circle cx="10.500" cy="10.500" r="4.500" fill="#4a8fe0" stroke="#eee" strokeWidth="1.300" />
          </Icon>
        </TaskCell>
        <TaskCell $on>
          <Icon w={21} h={21}>
            <rect x="0.700" y="0.700" width="19.600" height="19.600" fill="#14240c" stroke="#6fd62a" strokeWidth="1.400" />
            <text x="10.500" y="15" textAnchor="middle" fontSize="12" fontFamily="Liberation Sans, sans-serif" fill="#6fd62a">
              Dw
            </text>
          </Icon>
        </TaskCell>
        <TaskCell $on $active>
          <Icon w={22} h={22}>
            <rect width="22" height="22" fill="#68217a" />
            <g transform="translate(4 4) scale(0.7)">
              <path fill="#fff" d="M14 1l5 2v14l-5 2-6-6-4 3-3-1V5l3-1 4 3zM3.500 7.500v5L6 10zM14 6l-4 4 4 4z" />
            </g>
          </Icon>
        </TaskCell>
        <Tray>
          <TrayIcon $w={22}>
            <Icon w={12} h={8}>
              <path d="M1 7l5-5 5 5" stroke="#eee" strokeWidth="1.300" />
            </Icon>
          </TrayIcon>
          <TrayIcon $w={21}>
            <Icon w={16} h={12}>
              <path d="M4 3h11v8H4z" fill="#ddd" />
              <path d="M1 1v4M3 1v4M1 5h2M2 5v3h3" stroke="#ddd" />
            </Icon>
          </TrayIcon>
          <TrayIcon $w={22}>
            <Icon w={16} h={15}>
              <path d="M4 13c0-6 4-10 10-11M7 14c0-4 3-7 8-8M10 14c0-2 2-4 5-4" stroke="#777" strokeWidth="1" />
              <circle cx="5" cy="10" r="4.500" fill="#d8233a" />
              <path d="M3.500 8.500l3 3M6.500 8.500l-3 3" stroke="#fff" />
            </Icon>
          </TrayIcon>
          <TrayIcon $w={24}>
            <Icon w={18} h={14}>
              <path d="M1 5h3l4-3.500v11L4 9H1z" stroke="#ddd" />
              <path d="M10.500 4.500a4 4 0 0 1 0 5M12.500 3a6.500 6.500 0 0 1 0 8" stroke="#ddd" />
            </Icon>
          </TrayIcon>
          <Clock>
            3:03 PM
            <br />
            12/1/2019
          </Clock>
          <Notify>
            <Icon w={16} h={16}>
              <path d="M0 1h16v11H8l-3 3v-3H0z" fill="#eee" />
              <path d="M3 4h10M3 6.500h10M3 9h7" stroke="#888" />
            </Icon>
            <NotifyBadge>2</NotifyBadge>
          </Notify>
        </Tray>
      </Taskbar>
    </Screen>
  );
};

export default App;
